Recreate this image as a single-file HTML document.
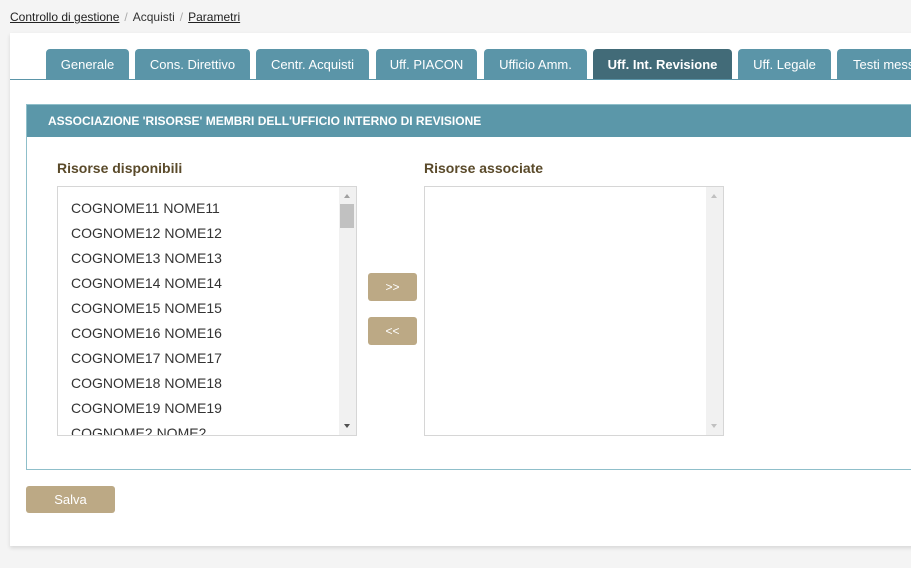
<!DOCTYPE html>
<html><head><meta charset="utf-8"><style>
*{box-sizing:border-box;margin:0;padding:0}
body{width:911px;height:568px;background:#f4f4f4;font-family:"Liberation Sans",Arial,sans-serif;position:relative;overflow:hidden}
.bc{position:absolute;left:10px;top:10px;font-size:12px;color:#333}
.bc a{color:#222;text-decoration:underline}
.bc .s{color:#aaa;margin:0 5px}
.card{position:absolute;left:10px;top:33px;width:920px;height:513px;background:#fff;box-shadow:0 2px 4px rgba(0,0,0,.12)}
.tabline{position:absolute;left:0;top:46px;width:920px;height:1px;background:#5b95a8}
.tab{position:absolute;top:16px;height:30px;background:#5b95a8;color:#fff;font-size:13px;line-height:32px;text-align:center;border-radius:4px 4px 0 0;white-space:nowrap;overflow:hidden}
.tab.act{background:#426b78;font-weight:bold}
.panel{position:absolute;left:16px;top:71px;width:910px;height:366px;border:1px solid #8fbfca}
.ph{height:32px;background:#5b97a9;color:#fff;font-size:12px;font-weight:bold;line-height:32px;padding-left:21px}
.lbl{position:absolute;top:127px;font-size:14px;font-weight:bold;color:#5a4a2a}
.box{position:absolute;top:153px;width:300px;height:250px;border:1px solid #d6d6d6;overflow:hidden;background:#fff}
.sb{position:absolute;right:0;top:0;width:17px;height:100%;background:#f1f1f1}
.it{position:absolute;left:13px;font-size:14px;color:#333;white-space:nowrap}
.btn{position:absolute;background:#bca985;color:#fff;border-radius:3px;font-size:12px;text-align:center}
</style></head><body>
<div class="bc"><a>Controllo di gestione</a><span class="s">/</span>Acquisti<span class="s">/</span><a>Parametri</a></div>
<div class="card">
<div class="tabline"></div>
<div class="tab" style="left:36px;width:83px">Generale</div>
<div class="tab" style="left:125px;width:115px">Cons. Direttivo</div>
<div class="tab" style="left:246px;width:113px">Centr. Acquisti</div>
<div class="tab" style="left:366px;width:101px">Uff. PIACON</div>
<div class="tab" style="left:474px;width:103px">Ufficio Amm.</div>
<div class="tab act" style="left:583px;width:139px">Uff. Int. Revisione</div>
<div class="tab" style="left:728px;width:93px">Uff. Legale</div>
<div class="tab" style="left:827px;width:120px;text-align:left;padding-left:16px">Testi messaggi</div>
<div class="panel"><div class="ph">ASSOCIAZIONE 'RISORSE' MEMBRI DELL'UFFICIO INTERNO DI REVISIONE</div></div>
<div class="lbl" style="left:47px">Risorse disponibili</div>
<div class="lbl" style="left:414px">Risorse associate</div>
<div class="box" style="left:47px">
<div class="sb"><div style="position:absolute;left:1px;top:17px;width:14px;height:24px;background:#c1c1c1"></div>
<div style="position:absolute;left:5px;top:7px;border:3.5px solid transparent;border-bottom:4px solid #a0a0a0;border-top:0"></div>
<div style="position:absolute;left:5px;bottom:7px;border:3.5px solid transparent;border-top:4px solid #505050;border-bottom:0"></div></div>
<div class="it" style="top:13px">COGNOME11 NOME11</div>
<div class="it" style="top:38px">COGNOME12 NOME12</div>
<div class="it" style="top:63px">COGNOME13 NOME13</div>
<div class="it" style="top:88px">COGNOME14 NOME14</div>
<div class="it" style="top:113px">COGNOME15 NOME15</div>
<div class="it" style="top:138px">COGNOME16 NOME16</div>
<div class="it" style="top:163px">COGNOME17 NOME17</div>
<div class="it" style="top:188px">COGNOME18 NOME18</div>
<div class="it" style="top:213px">COGNOME19 NOME19</div>
<div class="it" style="top:238px">COGNOME2 NOME2</div>
</div>
<div class="box" style="left:414px">
<div class="sb"><div style="position:absolute;left:5px;top:7px;border:3.5px solid transparent;border-bottom:4px solid #c0c0c0;border-top:0"></div>
<div style="position:absolute;left:5px;bottom:7px;border:3.5px solid transparent;border-top:4px solid #c0c0c0;border-bottom:0"></div></div>
</div>
<div class="btn" style="left:358px;top:240px;width:49px;height:28px;line-height:28px">&gt;&gt;</div>
<div class="btn" style="left:358px;top:284px;width:49px;height:28px;line-height:28px">&lt;&lt;</div>
<div class="btn" style="left:16px;top:453px;width:89px;height:27px;line-height:27px;font-size:13px">Salva</div>
</div>
</body></html>
